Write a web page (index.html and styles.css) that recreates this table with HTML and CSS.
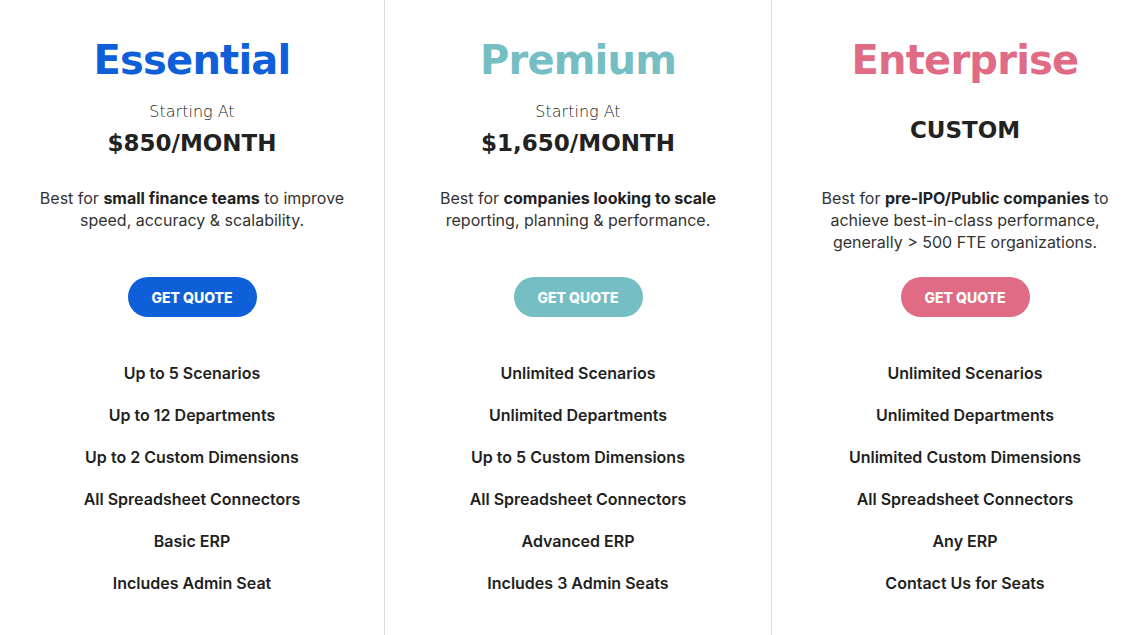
FILE: index.html
```html
<!DOCTYPE html>
<html lang="en">
<head>
<meta charset="utf-8">
<title>Pricing</title>
<link rel="stylesheet" href="styles.css">
</head>
<body>
<main class="plans">
  <section class="plan plan-essential">
    <h2 class="plan-title">Essential</h2>
    <div class="price-block">
      <p class="starting">Starting At</p>
      <p class="price">$850/MONTH</p>
    </div>
    <p class="desc">Best for <strong>small finance teams</strong> to improve speed, accuracy &amp; scalability.</p>
    <a class="btn" href="#">GET QUOTE</a>
    <ul class="features">
      <li>Up to 5 Scenarios</li>
      <li>Up to 12 Departments</li>
      <li>Up to 2 Custom Dimensions</li>
      <li>All Spreadsheet Connectors</li>
      <li>Basic ERP</li>
      <li>Includes Admin Seat</li>
    </ul>
  </section>
  <section class="plan plan-premium">
    <h2 class="plan-title">Premium</h2>
    <div class="price-block">
      <p class="starting">Starting At</p>
      <p class="price">$1,650/MONTH</p>
    </div>
    <p class="desc">Best for <strong>companies looking to scale</strong> reporting, planning &amp; performance.</p>
    <a class="btn" href="#">GET QUOTE</a>
    <ul class="features">
      <li>Unlimited Scenarios</li>
      <li>Unlimited Departments</li>
      <li>Up to 5 Custom Dimensions</li>
      <li>All Spreadsheet Connectors</li>
      <li>Advanced ERP</li>
      <li>Includes 3 Admin Seats</li>
    </ul>
  </section>
  <section class="plan plan-enterprise">
    <h2 class="plan-title">Enterprise</h2>
    <div class="price-block">
      <p class="price">CUSTOM</p>
    </div>
    <p class="desc">Best for <strong>pre-IPO/Public companies</strong> to achieve best-in-class performance, generally &gt; 500 FTE organizations.</p>
    <a class="btn" href="#">GET QUOTE</a>
    <ul class="features">
      <li>Unlimited Scenarios</li>
      <li>Unlimited Departments</li>
      <li>Unlimited Custom Dimensions</li>
      <li>All Spreadsheet Connectors</li>
      <li>Any ERP</li>
      <li>Contact Us for Seats</li>
    </ul>
  </section>
</main>
</body>
</html>
```
FILE: styles.css
```css
* { box-sizing: border-box; }
html, body { margin: 0; padding: 0; background: #fff; }
body {
  font-family: Inter, "Noto Sans", sans-serif;
  color: #222;
  overflow: hidden;
}
.plans {
  display: grid;
  grid-template-columns: 385px 387px 387px;
  height: 635px;
}
.plan {
  display: flex;
  flex-direction: column;
  align-items: center;
  text-align: center;
  border-right: 1px solid #dedede;
  padding-top: 36px;
}
.plan-title {
  margin: 0;
  font-family: "DejaVu Sans", sans-serif;
  font-weight: 700;
  font-size: 40px;
  line-height: 48px;
  letter-spacing: -0.8px;
}
.plan-essential .plan-title { color: #0e5fd8; }
.plan-premium .plan-title { color: #75bec4; }
.plan-enterprise .plan-title { color: #e06b85; }
.price-block {
  margin-top: 18px;
  height: 56px;
  display: flex;
  flex-direction: column;
  justify-content: center;
  gap: 6px;
}
.starting {
  margin: 0;
  font-family: "DejaVu Sans", sans-serif;
  font-weight: 200;
  font-size: 16px;
  line-height: 20px;
  color: #1a1a1a;
}
.price {
  margin: 0;
  font-family: "DejaVu Sans", sans-serif;
  font-weight: 700;
  font-size: 23px;
  line-height: 30px;
  color: #222;
}
.desc {
  margin: 29px 0 0;
  max-width: 330px;
  min-height: 66px;
  font-size: 16px;
  line-height: 22px;
  color: #333;
}
.desc strong { font-weight: 700; color: #222; }
.btn {
  margin-top: 24px;
  display: flex;
  align-items: center;
  justify-content: center;
  width: 129px;
  height: 40px;
  border-radius: 20px;
  color: #fff;
  font-size: 14px;
  font-weight: 800;
  text-decoration: none;
}
.plan-essential .btn { background: #0e5fd8; }
.plan-premium .btn { background: #75bec4; }
.plan-enterprise .btn { background: #e06b85; }
.features {
  list-style: none;
  margin: 35px 0 0;
  padding: 0;
}
.features li {
  font-size: 16px;
  font-weight: 600;
  line-height: 42px;
  color: #1f1f1f;
}
```
